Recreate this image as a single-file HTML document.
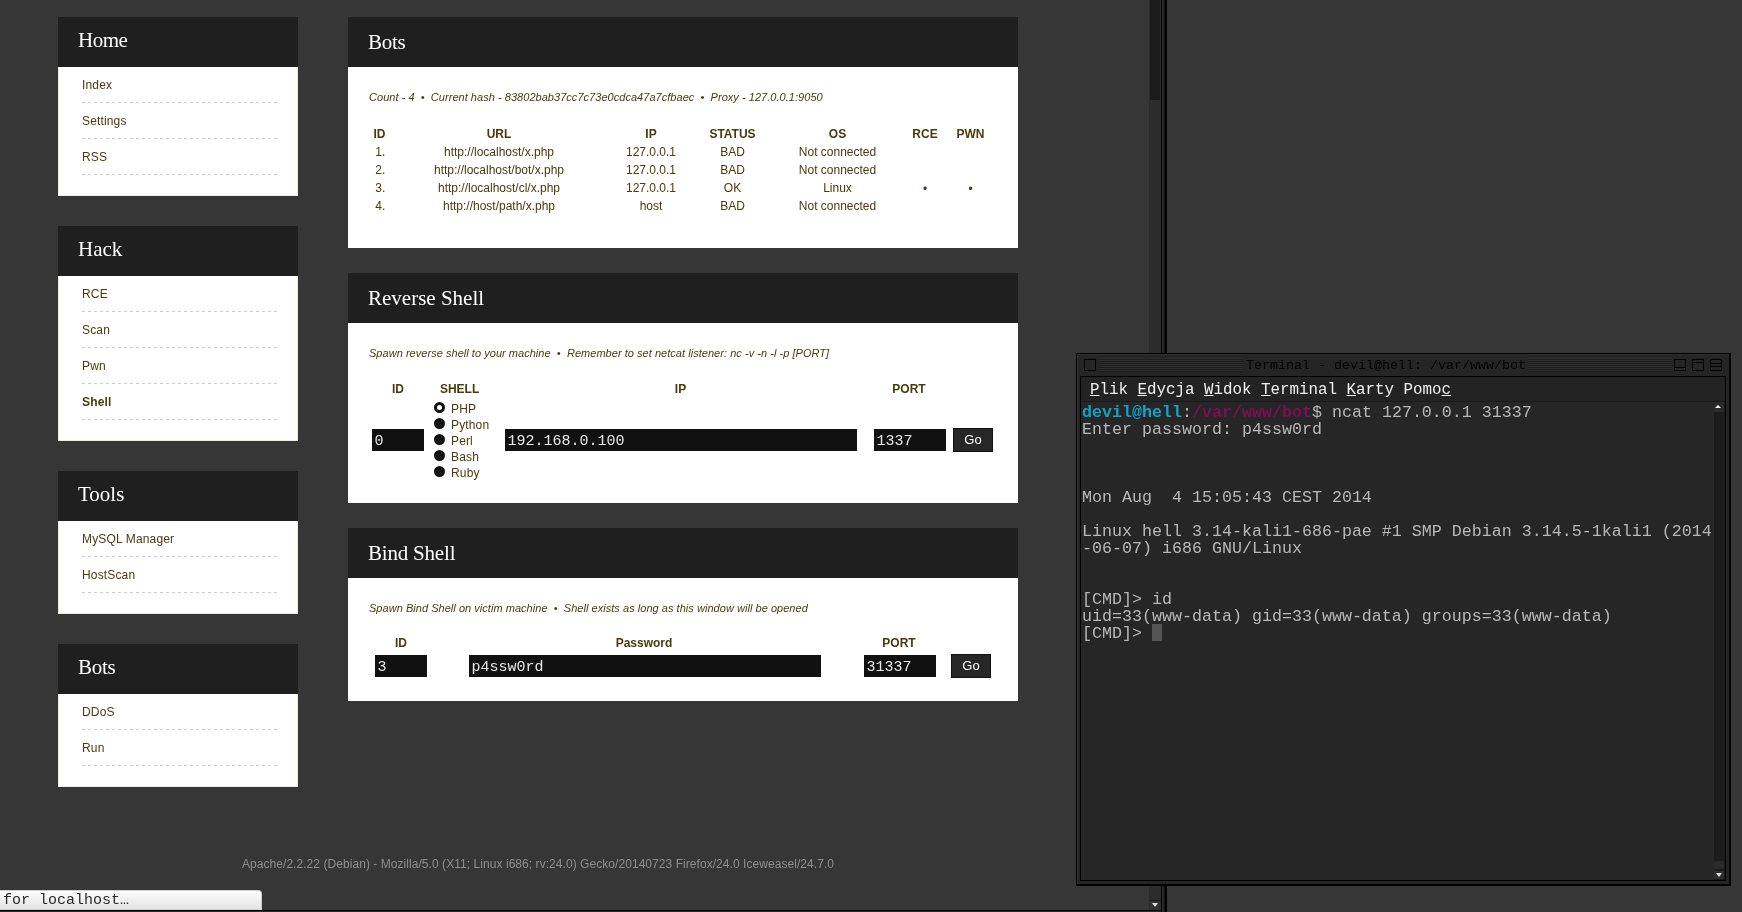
<!DOCTYPE html>
<html><head><meta charset="utf-8"><style>
*{margin:0;padding:0;box-sizing:border-box}
html,body{width:1742px;height:912px;overflow:hidden;background:#363636;font-family:"Liberation Sans",sans-serif;color:#4a3a0c}
div,span{position:absolute;white-space:nowrap}
.hd{background:#1f1f1f;height:50px}
.tt{font-family:"Liberation Serif",serif;font-size:21px;color:#fff;line-height:24px}
.bd{background:#fff;border:1px solid #e6f2dc;border-top:0}
.lk{font-size:12px;line-height:14px;letter-spacing:0.15px}
.dl{height:1px;background:repeating-linear-gradient(90deg,#cdcdcd 0,#cdcdcd 3px,transparent 3px,transparent 6px)}
.info{font-size:11px;font-style:italic;line-height:13px;letter-spacing:0.037px}
.tc{font-size:12px;line-height:14px;transform:translateX(-50%)}
.b{font-weight:bold}
.inp{background:#111;height:22px;color:#e8e8e8;font-family:"Liberation Mono",monospace;font-size:15px;line-height:25px;padding-left:2.5px}
.go{background:#272727;border:1px solid #111;width:40px;height:24px;color:#fff;font-size:13px;line-height:22px;text-align:center}
.rad{width:11px;height:11px;border-radius:50%;background:#111}
.mono{font-family:"Liberation Mono",monospace}
</style></head><body><div style="left:0;top:0;width:1742px;height:912px;will-change:transform;background:#363636">
<div class="hd" style="left:58px;top:17px;width:240px"><span class="tt" style="left:20px;top:11px;letter-spacing:-0.5px">Home</span></div>
<div class="bd" style="left:58px;top:67px;width:240px;height:129px"></div>
<span class="lk" style="left:82px;top:78px">Index</span>
<div class="dl" style="left:82px;top:102px;width:195px"></div>
<span class="lk" style="left:82px;top:114px">Settings</span>
<div class="dl" style="left:82px;top:138px;width:195px"></div>
<span class="lk" style="left:82px;top:150px">RSS</span>
<div class="dl" style="left:82px;top:174px;width:195px"></div>
<div class="hd" style="left:58px;top:226px;width:240px"><span class="tt" style="left:20px;top:11px;letter-spacing:0px">Hack</span></div>
<div class="bd" style="left:58px;top:276px;width:240px;height:165px"></div>
<span class="lk" style="left:82px;top:287px">RCE</span>
<div class="dl" style="left:82px;top:311px;width:195px"></div>
<span class="lk" style="left:82px;top:323px">Scan</span>
<div class="dl" style="left:82px;top:347px;width:195px"></div>
<span class="lk" style="left:82px;top:359px">Pwn</span>
<div class="dl" style="left:82px;top:383px;width:195px"></div>
<span class="lk b" style="left:82px;top:395px">Shell</span>
<div class="dl" style="left:82px;top:419px;width:195px"></div>
<div class="hd" style="left:58px;top:471px;width:240px"><span class="tt" style="left:20px;top:11px;letter-spacing:0px">Tools</span></div>
<div class="bd" style="left:58px;top:521px;width:240px;height:93px"></div>
<span class="lk" style="left:82px;top:532px">MySQL Manager</span>
<div class="dl" style="left:82px;top:556px;width:195px"></div>
<span class="lk" style="left:82px;top:568px">HostScan</span>
<div class="dl" style="left:82px;top:592px;width:195px"></div>
<div class="hd" style="left:58px;top:644px;width:240px"><span class="tt" style="left:20px;top:11px;letter-spacing:-0.3px">Bots</span></div>
<div class="bd" style="left:58px;top:694px;width:240px;height:93px"></div>
<span class="lk" style="left:82px;top:705px">DDoS</span>
<div class="dl" style="left:82px;top:729px;width:195px"></div>
<span class="lk" style="left:82px;top:741px">Run</span>
<div class="dl" style="left:82px;top:765px;width:195px"></div>
<div class="hd" style="left:348px;top:17px;width:670px"><span class="tt" style="left:20px;top:13px;letter-spacing:-0.3px">Bots</span></div>
<div class="bd" style="left:348px;top:67px;width:670px;height:181px;border-color:#fff"></div>
<span class="info" style="left:369px;top:91px">Count - 4 &nbsp;&bull;&nbsp; Current hash - 83802bab37cc7c73e0cdca47a7cfbaec &nbsp;&bull;&nbsp; Proxy - 127.0.0.1:9050</span>
<span class="tc b" style="left:379.5px;top:127px">ID</span>
<span class="tc b" style="left:499px;top:127px">URL</span>
<span class="tc b" style="left:651px;top:127px">IP</span>
<span class="tc b" style="left:732.5px;top:127px">STATUS</span>
<span class="tc b" style="left:837.5px;top:127px">OS</span>
<span class="tc b" style="left:925px;top:127px">RCE</span>
<span class="tc b" style="left:970.5px;top:127px">PWN</span>
<span class="tc" style="left:380.3px;top:145px">1.</span>
<span class="tc" style="left:499px;top:145px">http://localhost/x.php</span>
<span class="tc" style="left:651px;top:145px">127.0.0.1</span>
<span class="tc" style="left:732.5px;top:145px">BAD</span>
<span class="tc" style="left:837.5px;top:145px">Not connected</span>
<span class="tc" style="left:380.3px;top:163px">2.</span>
<span class="tc" style="left:499px;top:163px">http://localhost/bot/x.php</span>
<span class="tc" style="left:651px;top:163px">127.0.0.1</span>
<span class="tc" style="left:732.5px;top:163px">BAD</span>
<span class="tc" style="left:837.5px;top:163px">Not connected</span>
<span class="tc" style="left:380.3px;top:181px">3.</span>
<span class="tc" style="left:499px;top:181px">http://localhost/cl/x.php</span>
<span class="tc" style="left:651px;top:181px">127.0.0.1</span>
<span class="tc" style="left:732.5px;top:181px">OK</span>
<span class="tc" style="left:837.5px;top:181px">Linux</span>
<span class="tc" style="left:925px;top:182px">&bull;</span>
<span class="tc" style="left:970.5px;top:182px">&bull;</span>
<span class="tc" style="left:380.3px;top:199px">4.</span>
<span class="tc" style="left:499px;top:199px">http://host/path/x.php</span>
<span class="tc" style="left:651px;top:199px">host</span>
<span class="tc" style="left:732.5px;top:199px">BAD</span>
<span class="tc" style="left:837.5px;top:199px">Not connected</span>
<div class="hd" style="left:348px;top:273px;width:670px"><span class="tt" style="left:20px;top:13px;letter-spacing:0px">Reverse Shell</span></div>
<div class="bd" style="left:348px;top:323px;width:670px;height:180px;border-color:#fff"></div>
<span class="info" style="left:369px;top:347px">Spawn reverse shell to your machine &nbsp;&bull;&nbsp; Remember to set netcat listener: nc -v -n -l -p [PORT]</span>
<span class="tc b" style="left:398px;top:382px">ID</span>
<span class="tc b" style="left:459.6px;top:382px">SHELL</span>
<span class="tc b" style="left:680.5px;top:382px">IP</span>
<span class="tc b" style="left:909px;top:382px">PORT</span>
<div class="inp" style="left:372px;top:429px;width:52px">0</div>
<div class="rad" style="left:434px;top:402px"></div>
<span class="lk" style="left:451px;top:402px">PHP</span>
<div class="rad" style="left:434px;top:418px"></div>
<span class="lk" style="left:451px;top:418px">Python</span>
<div class="rad" style="left:434px;top:434px"></div>
<span class="lk" style="left:451px;top:434px">Perl</span>
<div class="rad" style="left:434px;top:450px"></div>
<span class="lk" style="left:451px;top:450px">Bash</span>
<div class="rad" style="left:434px;top:466px"></div>
<span class="lk" style="left:451px;top:466px">Ruby</span>
<div style="left:437px;top:405px;width:5px;height:5px;border-radius:50%;background:#fff"></div>
<div class="inp" style="left:505px;top:429px;width:352px">192.168.0.100</div>
<div class="inp" style="left:874px;top:429px;width:72px">1337</div>
<div class="go" style="left:953px;top:428px">Go</div>
<div class="hd" style="left:348px;top:528px;width:670px"><span class="tt" style="left:20px;top:13px;letter-spacing:-0.2px">Bind Shell</span></div>
<div class="bd" style="left:348px;top:578px;width:670px;height:123px;border-color:#fff"></div>
<span class="info" style="left:369px;top:602px">Spawn Bind Shell on victim machine &nbsp;&bull;&nbsp; Shell exists as long as this window will be opened</span>
<span class="tc b" style="left:401px;top:636px">ID</span>
<span class="tc b" style="left:644px;top:636px">Password</span>
<span class="tc b" style="left:899px;top:636px">PORT</span>
<div class="inp" style="left:375px;top:655px;width:52px">3</div>
<div class="inp" style="left:469px;top:655px;width:352px">p4ssw0rd</div>
<div class="inp" style="left:864px;top:655px;width:72px">31337</div>
<div class="go" style="left:951px;top:654px">Go</div>
<span style="left:538px;top:857px;transform:translateX(-50%);font-size:12px;line-height:14px;color:#8e8e8e;letter-spacing:0.055px">Apache/2.2.22 (Debian) - Mozilla/5.0 (X11; Linux i686; rv:24.0) Gecko/20140723 Firefox/24.0 Iceweasel/24.7.0</span>
<div style="left:0;top:890px;width:262px;height:20px;background:linear-gradient(#fdfdfd,#e4e4e4);border-top-right-radius:4px;border:1px solid #cfcfcf;border-left:0"></div>
<span class="mono" style="left:3px;top:893px;font-size:15px;line-height:16px;color:#2a2a2a">for localhost…</span>
<div style="left:0;top:910px;width:1161px;height:1px;background:#050505"></div>
<div style="left:0;top:911px;width:1161px;height:1px;background:#2b2b2b"></div>
<div style="left:1149px;top:0;width:12px;height:910px;background:#2c2c2c"></div>
<div style="left:1150px;top:0;width:10px;height:100px;background:#1b1b1b"></div>
<div style="left:1161px;top:0;width:6px;height:912px;background:linear-gradient(90deg,#050505 0,#050505 1px,#2a2a2a 1px,#262626 3px,#000 4px)"></div>
<div style="left:1149px;top:100px;width:1px;height:810px;background:#2a2a2a"></div>
<div style="left:1150px;top:900px;width:11px;height:1px;background:#1a1a1a"></div>
<div style="left:1150px;top:901px;width:10px;height:9px;background:#303030"></div>
<div style="left:1152px;top:903px;width:0;height:0;border-left:3px solid transparent;border-right:3px solid transparent;border-top:4px solid #ddd"></div>
<div style="left:1076px;top:353px;width:655px;height:533px;background:#000"></div>
<div style="left:1077px;top:354px;width:652px;height:530px;background:#252525;border-left:1px solid #333;border-top:1px solid #2e2e2e"></div>
<div style="left:1084px;top:359px;width:12px;height:12px;border:1px solid #000;background:#262626"></div>
<div style="left:1099px;top:358px;width:143px;height:14px;background:repeating-linear-gradient(180deg,#2f2f2f 0,#2f2f2f 1px,#1c1c1c 1px,#1c1c1c 2px)"></div>
<div style="left:1528px;top:358px;width:144px;height:14px;background:repeating-linear-gradient(180deg,#2f2f2f 0,#2f2f2f 1px,#1c1c1c 1px,#1c1c1c 2px)"></div>
<span class="mono" style="left:1246px;top:358px;font-size:13.33px;line-height:16px;color:#000">Terminal - devil@hell: /var/www/bot</span>
<div style="left:1674px;top:359px;width:12px;height:12px;border:1px solid #000;background:#262626"></div>
<div style="left:1675px;top:367px;width:10px;height:1px;background:#000"></div>
<div style="left:1692px;top:359px;width:12px;height:12px;border:1px solid #000;background:#262626"></div>
<div style="left:1693px;top:362px;width:10px;height:1px;background:#000"></div>
<div style="left:1710px;top:359px;width:12px;height:12px;border:1px solid #000;background:#262626"></div>
<div style="left:1711px;top:363px;width:10px;height:1px;background:#000"></div>
<div style="left:1711px;top:366px;width:10px;height:1px;background:#000"></div>
<div style="left:1080px;top:376px;width:646px;height:505px;background:#000"></div>
<div style="left:1081px;top:377px;width:644px;height:24px;background:#232323"></div>
<div style="left:1081px;top:401px;width:644px;height:1px;background:#1a1a1a"></div>
<div style="left:1081px;top:402px;width:644px;height:478px;background:#262626"></div>
<span class="mono" style="left:1090px;top:381px;font-size:15.83px;line-height:18px;color:#f0f0f0"><u>P</u>lik <u>E</u>dycja <u>W</u>idok <u>T</u>erminal <u>K</u>arty Pomo<u>c</u></span>
<div style="left:1714px;top:402px;width:11px;height:478px;background:#1b1b1b"></div>
<div style="left:1714px;top:402px;width:10px;height:10px;background:#2a2a2a"></div>
<div style="left:1715px;top:405px;width:0;height:0;border-left:3.5px solid transparent;border-right:3.5px solid transparent;border-bottom:3.5px solid #fff"></div>
<div style="left:1714px;top:861px;width:10px;height:8px;background:#2a2a2a"></div>
<div style="left:1714px;top:871px;width:10px;height:8px;background:#2e2e2e"></div>
<div style="left:1716px;top:873px;width:0;height:0;border-left:3px solid transparent;border-right:3px solid transparent;border-top:4px solid #ddd"></div>
<span class="mono" style="left:1082px;top:404px;font-size:16.67px;line-height:17px;color:#b8b8b8;white-space:pre"><b style="color:#13a3c8">devil@hell</b>:<b style="color:#7c0f52">/var/www/bot</b>$ ncat 127.0.0.1 31337</span>
<span class="mono" style="left:1082px;top:421px;font-size:16.67px;line-height:17px;color:#b8b8b8;white-space:pre">Enter password: p4ssw0rd</span>
<span class="mono" style="left:1082px;top:489px;font-size:16.67px;line-height:17px;color:#b8b8b8;white-space:pre">Mon Aug  4 15:05:43 CEST 2014</span>
<span class="mono" style="left:1082px;top:523px;font-size:16.67px;line-height:17px;color:#b8b8b8;white-space:pre">Linux hell 3.14-kali1-686-pae #1 SMP Debian 3.14.5-1kali1 (2014</span>
<span class="mono" style="left:1082px;top:540px;font-size:16.67px;line-height:17px;color:#b8b8b8;white-space:pre">-06-07) i686 GNU/Linux</span>
<span class="mono" style="left:1082px;top:591px;font-size:16.67px;line-height:17px;color:#b8b8b8;white-space:pre">[CMD]&gt; id</span>
<span class="mono" style="left:1082px;top:608px;font-size:16.67px;line-height:17px;color:#b8b8b8;white-space:pre">uid=33(www-data) gid=33(www-data) groups=33(www-data)</span>
<span class="mono" style="left:1082px;top:625px;font-size:16.67px;line-height:17px;color:#b8b8b8;white-space:pre">[CMD]&gt; </span>
<div style="left:1152px;top:624px;width:10px;height:17px;background:#555"></div>
</div></body></html>
